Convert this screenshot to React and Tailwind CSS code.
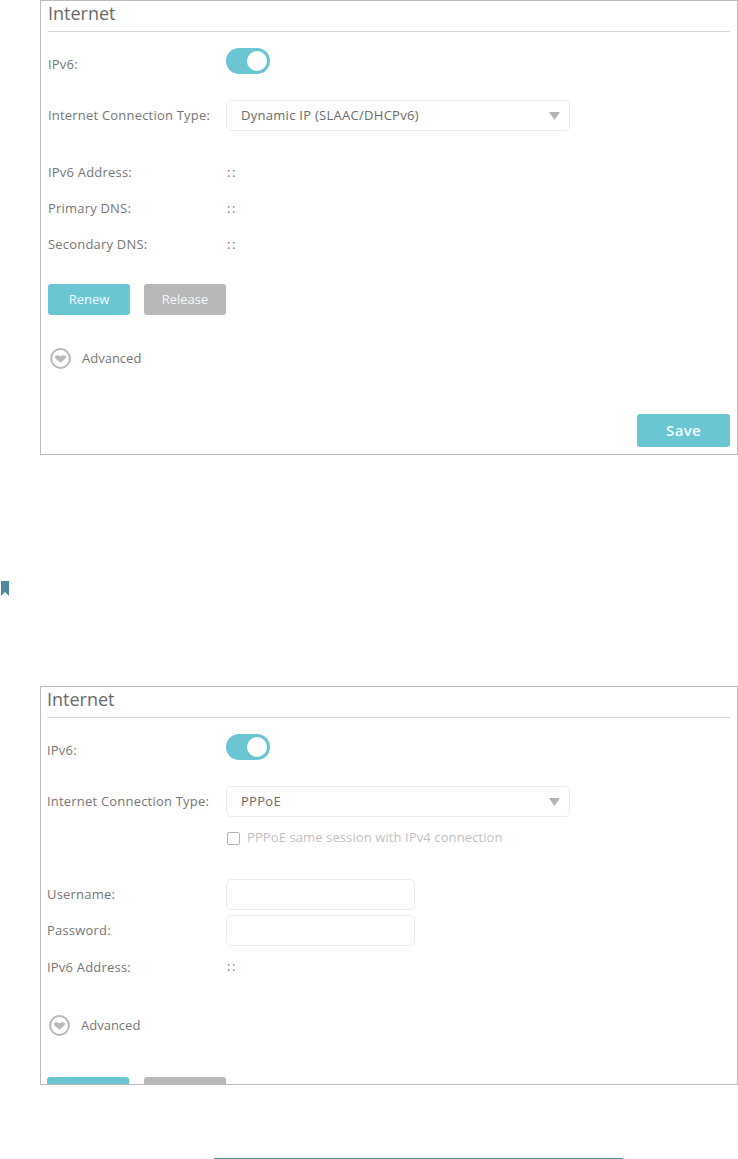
const font = { fontFamily: '"Open Sans", sans-serif' };

function Toggle() {
  return (
    <div className="flex h-[26px] w-[44px] items-center justify-end rounded-full bg-[#6bc6d4] pr-[3px]">
      <div className="h-[20px] w-[20px] rounded-full bg-white" />
    </div>
  );
}

function Select({ value }) {
  return (
    <div className="flex h-[31px] w-[344px] items-center justify-between rounded-[5px] border border-[#ebebeb] bg-white pl-[14px] pr-[9px] text-[13px] tracking-[0.28px] text-[#6a6a6a]">
      <span>{value}</span>
      <svg width="11" height="8" viewBox="0 0 11 8" aria-hidden="true">
        <path d="M0 0h11L5.5 8z" fill="#b4b4b4" />
      </svg>
    </div>
  );
}

function Row({ label, labelClass = "w-[179px]", className = "", children }) {
  return (
    <div className={`flex items-center text-[13px] tracking-[0.2px] text-[#767676] ${className}`}>
      <div className={`shrink-0 ${labelClass}`}>{label}</div>
      {children}
    </div>
  );
}

function Empty() {
  return <span className="pl-[1px] tracking-[1.5px]">::</span>;
}

function Advanced() {
  return (
    <div className="flex items-center gap-[11px] pl-[2px] text-[13px] text-[#767676]">
      <svg width="21" height="21" viewBox="0 0 21 21" aria-hidden="true">
        <circle cx="10.5" cy="10.5" r="9.4" fill="none" stroke="#b9b9b9" strokeWidth="2" />
        <path d="M5 8.2c1.6-1.4 3.8-1.1 5.5.4 1.7-1.5 3.9-1.8 5.5-.4 0 2.8-3.4 4.5-5.5 6.4-2.1-1.9-5.5-3.6-5.5-6.4z" fill="#b9b9b9" />
      </svg>
      <span>Advanced</span>
    </div>
  );
}

function Btn({ gray, children }) {
  return (
    <button
      type="button"
      className={`h-[31px] w-[82px] shrink-0 rounded-[3px] text-[13px] font-medium text-[#f2fafb] ${gray ? "bg-[#b8b8b8]" : "bg-[#6bc6d4]"}`}
    >
      {children}
    </button>
  );
}

function Title({ className }) {
  return (
    <div className={`border-b border-[#d4d4d4] text-[18px] text-[#6a6a6a] ${className}`}>Internet</div>
  );
}

export default function App() {
  return (
    <div className="relative h-[1159px] w-[738px] overflow-hidden bg-white" style={font}>
      <div className="ml-[40px] flex h-[455px] flex-col border border-[#bcbcbc] pl-[7px] pr-[7px]">
        <Title className="h-[31px] leading-[25px]" />
        <Row label="IPv6:" labelClass="w-[178px] pt-[7px]" className="mt-[16px] h-[26px]">
          <Toggle />
        </Row>
        <Row label="Internet Connection Type:" labelClass="w-[178px]" className="mt-[26px]">
          <Select value="Dynamic IP (SLAAC/DHCPv6)" />
        </Row>
        <Row label="IPv6 Address:" labelClass="w-[178px]" className="mt-[30px] h-[24px]">
          <Empty />
        </Row>
        <Row label="Primary DNS:" labelClass="w-[178px]" className="mt-[12px] h-[24px]">
          <Empty />
        </Row>
        <Row label="Secondary DNS:" labelClass="w-[178px]" className="mt-[12px] h-[24px]">
          <Empty />
        </Row>
        <div className="mt-[27px] flex gap-[14px]">
          <Btn>Renew</Btn>
          <Btn gray>Release</Btn>
        </div>
        <div className="mt-[33px]">
          <Advanced />
        </div>
        <div className="mt-[45px] flex justify-end">
          <button type="button" className="h-[33px] w-[93px] rounded-[3px] bg-[#6bc6d4] text-[15px] font-semibold tracking-[0.3px] text-[#f2fafb]">
            Save
          </button>
        </div>
      </div>

      <div className="ml-[1px] mt-[126px] h-[15px] w-[8px]">
        <svg width="8" height="15" viewBox="0 0 8 15" aria-hidden="true">
          <path d="M0 0h8v15L4 11 0 15z" fill="#4f8a9a" />
        </svg>
      </div>

      <div className="ml-[40px] mt-[90px] h-[399px] overflow-hidden border border-[#bcbcbc] pl-[6px] pr-[7px]">
        <Title className="h-[31px] leading-[25px]" />
        <Row label="IPv6:" labelClass="w-[179px] pt-[7px]" className="mt-[16px] h-[26px]">
          <Toggle />
        </Row>
        <Row label="Internet Connection Type:" labelClass="w-[179px] pt-[1px]" className="mt-[26px]">
          <Select value="PPPoE" />
        </Row>
        <div className="ml-[179px] mt-[13px] flex h-[16px] items-center gap-[7px] text-[13px] tracking-[0.1px] text-[#c2c2c2]">
          <div className="ml-[1px] h-[13px] w-[13px] rounded-[2px] border border-[#b4b4b4]" />
          <span>PPPoE same session with IPv4 connection</span>
        </div>
        <Row label="Username:" labelClass="w-[179px] pt-[1px]" className="mt-[33px]">
          <div className="h-[31px] w-[189px] rounded-[5px] border border-[#ebebeb]" />
        </Row>
        <Row label="Password:" labelClass="w-[179px] pt-[1px]" className="mt-[5px]">
          <div className="h-[31px] w-[189px] rounded-[5px] border border-[#ebebeb]" />
        </Row>
        <Row label="IPv6 Address:" labelClass="w-[179px] pt-[1px]" className="mt-[9px] h-[24px]">
          <Empty />
        </Row>
        <div className="mt-[36px]">
          <Advanced />
        </div>
        <div className="mt-[41px] flex gap-[15px]">
          <Btn />
          <Btn gray />
        </div>
      </div>

      <div className="ml-[214px] mt-[73px] h-[1px] w-[409px] bg-[#4a8d9b]" />
    </div>
  );
}
